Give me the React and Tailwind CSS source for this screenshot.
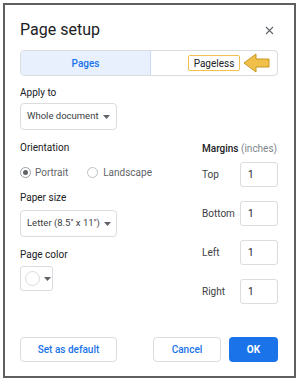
import React from "react";

const Caret = () => (
  <svg width="7" height="4" viewBox="0 0 7 4" className="shrink-0">
    <path d="M0 0h7L3.5 4z" fill="#5f6368" />
  </svg>
);

function Dropdown({ label }) {
  return (
    <div className="flex h-[27px] w-[97px] items-center gap-[4px] rounded-[4px] border border-[#dadce0] pl-[6px] text-[9.5px] text-[#3c4043]">
      <span className="whitespace-nowrap">{label}</span>
      <Caret />
    </div>
  );
}

function MarginRow({ label }) {
  return (
    <div className="flex items-center">
      <span className="w-[38px] text-[10px] text-[#3c4043]">{label}</span>
      <div className="flex h-[25px] w-[38px] items-center rounded-[3px] border border-[#dadce0] pl-[7px] text-[10px] text-[#202124]">
        1
      </div>
    </div>
  );
}

export default function App() {
  return (
    <div className="h-[381px] w-[299px] bg-white p-[3px] font-['Roboto',sans-serif]">
      <div className="flex h-full flex-col border-2 border-[#5f5f5f] pl-[15px] pr-[15px] pt-[13px] pb-[14px]">
        <div className="flex h-[24px] items-center justify-between">
          <h1 className="text-[16px] leading-[24px] text-[#202124]">Page setup</h1>
          <svg width="9" height="9" viewBox="0 0 9 9" className="mr-[5px]">
            <path d="M1 1l7 7M8 1L1 8" stroke="#5f6368" strokeWidth="1.1" />
          </svg>
        </div>

        <div className="mt-[8px] flex h-[26px] w-[258px] overflow-hidden rounded-[4px] border border-[#dadce0]">
          <div className="flex w-[130px] items-center justify-center border-r border-[#c6dafc] bg-[#e8f0fe] text-[10px] font-medium text-[#1a73e8]">
            Pages
          </div>
          <div className="flex flex-1 items-center pl-[37px]">
            <div className="flex h-[16px] w-[52px] items-center justify-center rounded-[2px] border-[1.5px] border-[#f2c14e] text-[10px] text-[#202124]">
              Pageless
            </div>
            <svg width="28" height="20" viewBox="0 0 28 20" className="ml-[3px]">
              <path
                d="M1 10L13 1v5h13v8H13v5z"
                fill="#f0c04a"
                stroke="#c8961e"
                strokeWidth="1"
                strokeLinejoin="round"
              />
            </svg>
          </div>
        </div>

        <p className="mt-[10px] text-[10px] leading-[14px] text-[#202124]">Apply to</p>
        <div className="mt-[3px]">
          <Dropdown label="Whole document" />
        </div>

        <div className="mt-[11px] flex">
          <div className="w-[182px]">
            <p className="text-[10px] leading-[14px] text-[#202124]">Orientation</p>
            <div className="mt-[9px] flex h-[16px] items-center text-[10px] text-[#5f6368]">
              <span className="flex h-[11px] w-[11px] items-center justify-center rounded-full border border-[#9aa0a6]">
                <span className="h-[5px] w-[5px] rounded-full bg-[#5f6368]" />
              </span>
              <span className="ml-[4px]">Portrait</span>
              <span className="ml-[19px] h-[11px] w-[11px] rounded-full border border-[#bdc1c6]" />
              <span className="ml-[5px]">Landscape</span>
            </div>
            <p className="mt-[11px] text-[10px] leading-[14px] text-[#202124]">Paper size</p>
            <div className="mt-[5px]">
              <Dropdown label={'Letter (8.5" x 11")'} />
            </div>
            <p className="mt-[11px] text-[10px] leading-[14px] text-[#202124]">Page color</p>
            <div className="mt-[4px] flex h-[25px] w-[33px] items-center rounded-[3px] border border-[#dadce0] pl-[4px]">
              <span className="h-[15px] w-[15px] rounded-full border border-[#dadce0] bg-white" />
              <span className="ml-[4px]">
                <Caret />
              </span>
            </div>
          </div>

          <div className="flex flex-col">
            <p className="mt-[1px] text-[10px] leading-[14px] text-[#202124]">
              <span className="font-medium">Margins</span>{" "}
              <span className="text-[#80868b]">(inches)</span>
            </p>
            <div className="mt-[6px] flex flex-col gap-[14px]">
              <MarginRow label="Top" />
              <MarginRow label="Bottom" />
              <MarginRow label="Left" />
              <MarginRow label="Right" />
            </div>
          </div>
        </div>

        <div className="mt-auto flex items-center">
          <button className="h-[25px] w-[97px] rounded-[4px] border border-[#dadce0] text-[10px] font-medium text-[#1a73e8]">
            Set as default
          </button>
          <button className="ml-auto h-[25px] w-[68px] rounded-[4px] border border-[#dadce0] text-[10px] font-medium text-[#1a73e8]">
            Cancel
          </button>
          <button className="ml-[8px] mr-[1px] h-[25px] w-[49px] rounded-[4px] bg-[#1a73e8] text-[10px] font-bold text-white">
            OK
          </button>
        </div>
      </div>
    </div>
  );
}
